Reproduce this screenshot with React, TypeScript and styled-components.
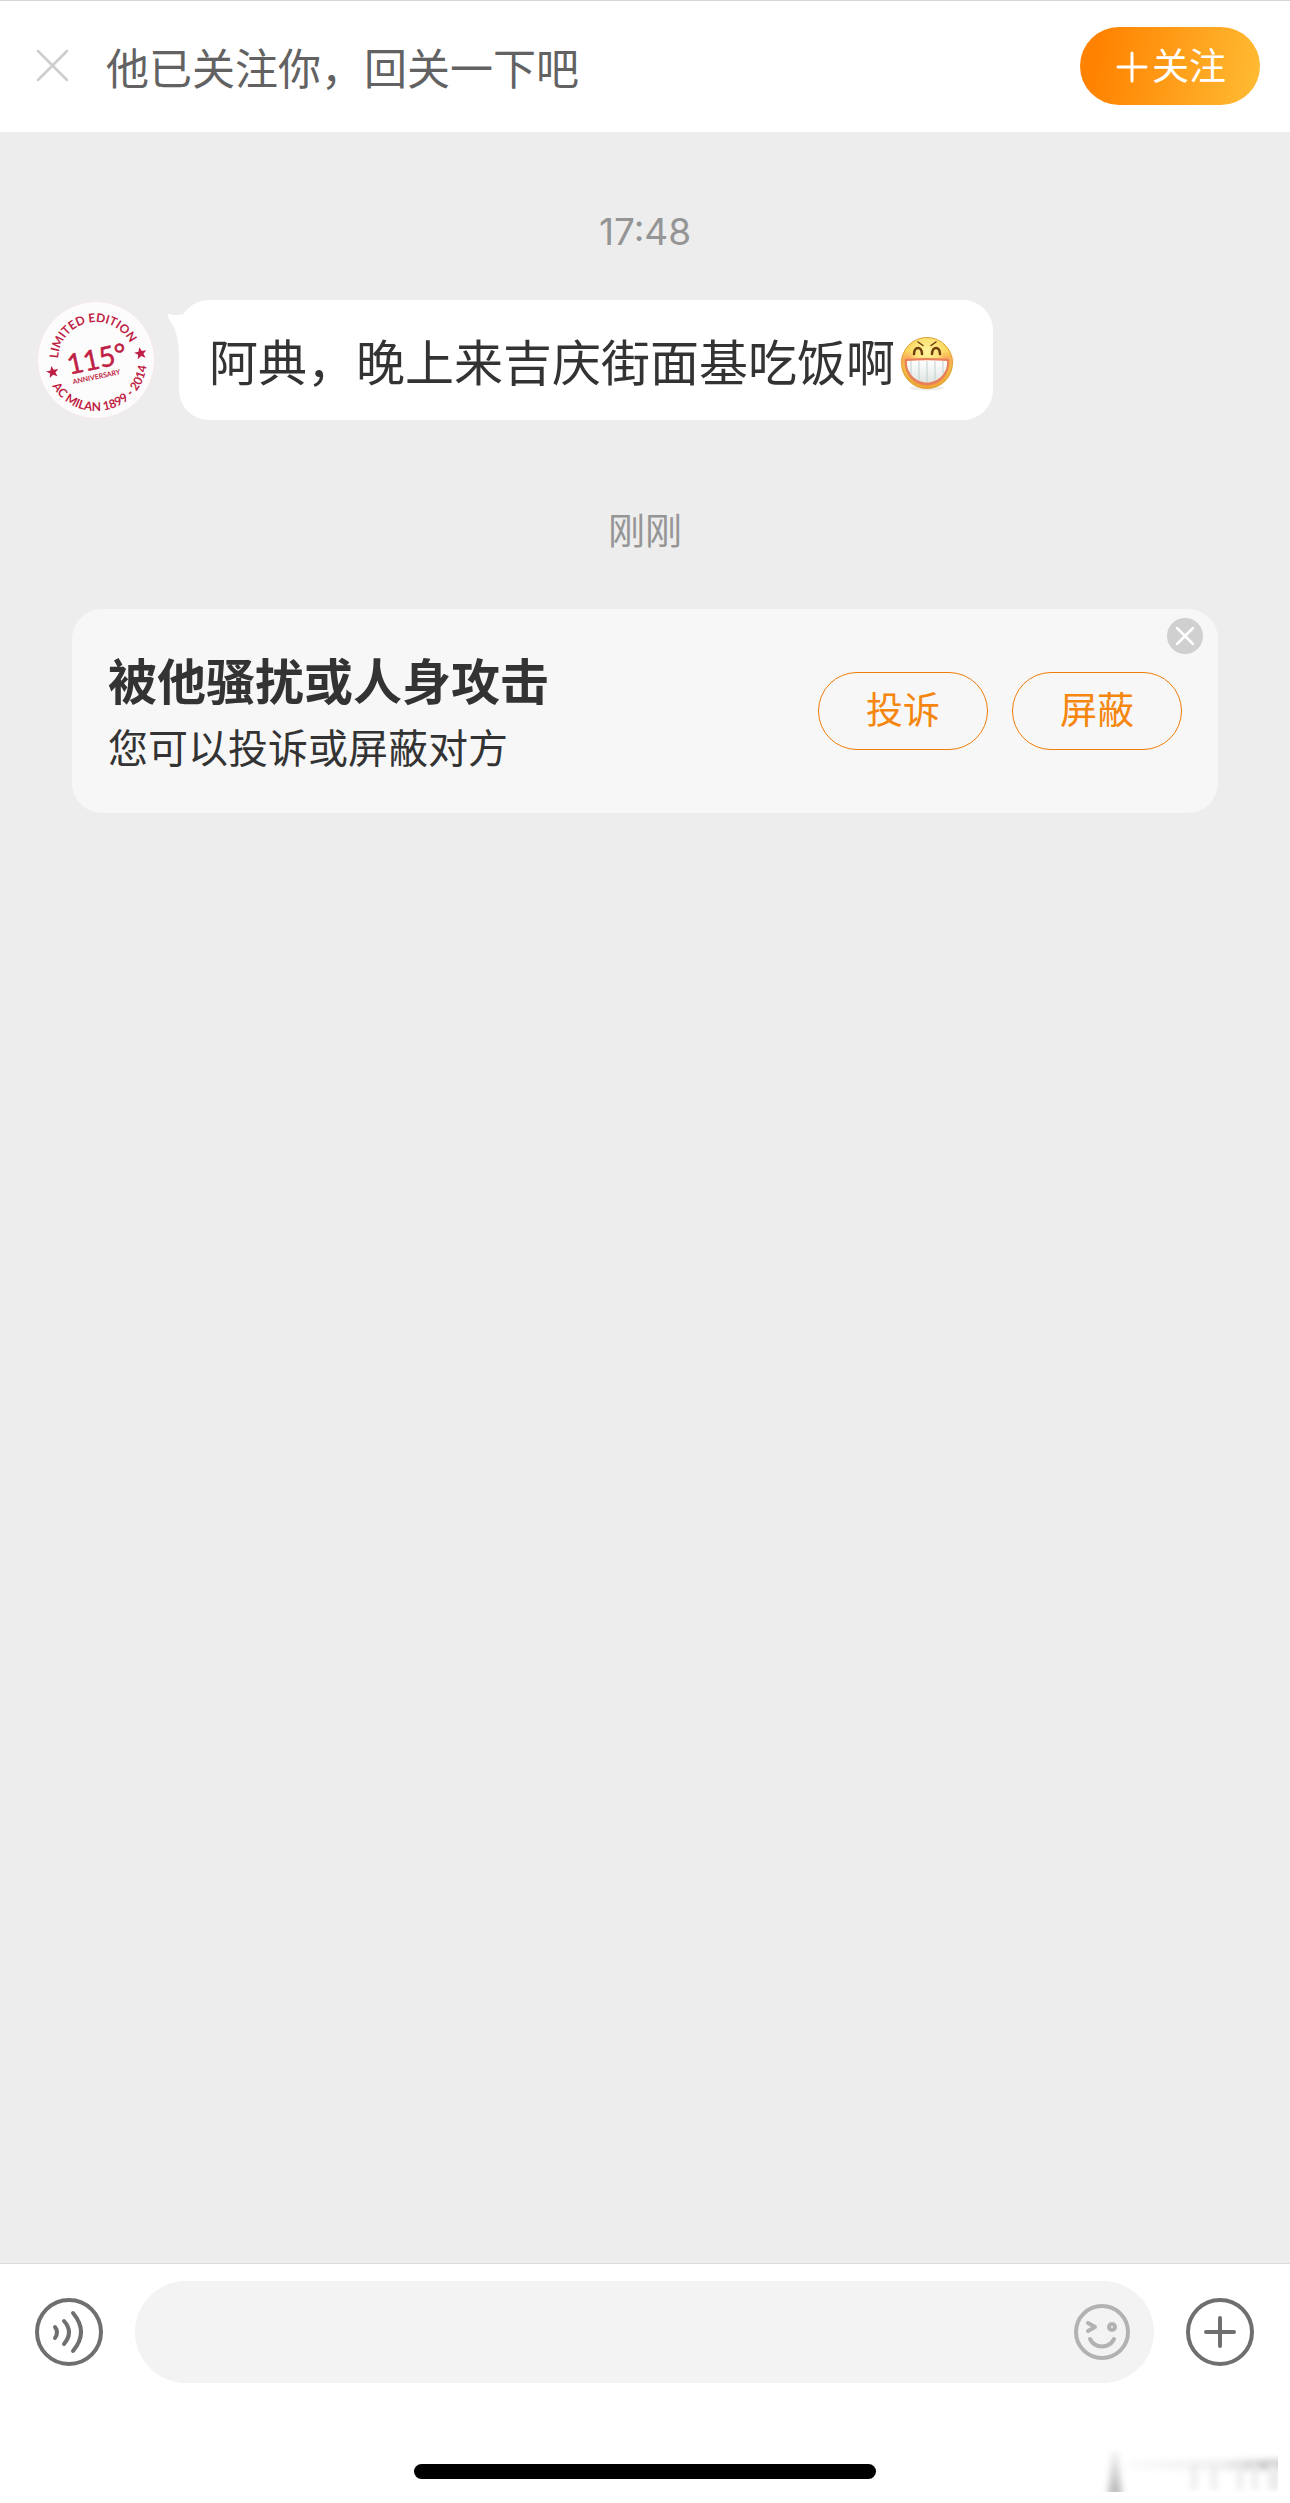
import React, { useState } from "react";
import styled, { createGlobalStyle } from "styled-components";

const GlobalStyle = createGlobalStyle`
  *, *::before, *::after { box-sizing: border-box; }
  body {
    margin: 0;
    background: #ededed;
    font-family: Inter, "Noto Sans CJK SC", sans-serif;
    color: #333;
  }
  button {
    margin: 0;
    padding: 0;
    border: 0;
    background: none;
    font: inherit;
    color: inherit;
    cursor: pointer;
  }
  svg { display: block; }
`;

const Page = styled.div`
  display: flex;
  flex-direction: column;
  min-height: 100vh;
`;

const FollowBanner = styled.header`
  display: flex;
  align-items: center;
  gap: 36px;
  padding: 26px 30px 27px 36px;
  background: #fff;
  border-top: 1px solid #d6d6d6;
`;

const BannerText = styled.p`
  flex: 1;
  margin: 0;
  padding-top: 6px;
  font-size: 43px;
  line-height: 60px;
  color: #626262;
`;

const IconButton = styled.button`
  flex: none;
`;

const FollowButton = styled.button`
  display: flex;
  align-items: center;
  justify-content: center;
  gap: 4px;
  width: 180px;
  height: 78px;
  padding: 2px 0 0 2px;
  border-radius: 39px;
  background: linear-gradient(100deg, #ff8200 10%, #ffbc34 100%);
  color: #fff;
  font-size: 37px;
  line-height: 54px;
`;

const Messages = styled.main`
  flex: 1;
  display: flex;
  flex-direction: column;
`;

const TimeStamp = styled.time<{ $gap: number }>`
  align-self: center;
  margin-top: ${(p) => p.$gap}px;
  font-size: 37px;
  line-height: 56px;
  color: #959595;
`;

const MessageRow = styled.article`
  display: flex;
  align-items: flex-start;
  gap: 23px;
  margin-top: 40px;
  padding: 0 36px;
`;

const Bubble = styled.div`
  position: relative;
  display: flex;
  align-items: center;
  gap: 4px;
  min-height: 120px;
  padding: 28px 38px 20px 30px;
  border-radius: 30px;
  background: #fff;
`;

const Tail = styled.svg`
  position: absolute;
  left: -12px;
  top: 12px;
`;

const BubbleText = styled.p`
  margin: 0;
  font-size: 49px;
  line-height: 72px;
`;

const Card = styled.section`
  position: relative;
  display: flex;
  align-items: center;
  justify-content: space-between;
  gap: 24px;
  margin: 49px 72px 0;
  padding: 33px 36px;
  min-height: 204px;
  border-radius: 30px;
  background: #f7f7f7;
`;

const CardCopy = styled.div`
  padding-top: 4px;
`;

const CardTitle = styled.h2`
  margin: 0;
  font-size: 49px;
  font-weight: 700;
  line-height: 72px;
`;

const CardNote = styled.p`
  margin: 0;
  font-size: 40px;
  line-height: 60px;
`;

const CardActions = styled.div`
  display: flex;
  gap: 24px;
`;

const OutlineButton = styled.button`
  && { border: 1px solid #ee7c08; }
  width: 170px;
  height: 78px;
  border-radius: 39px;
  color: #f5860f;
  font-size: 37px;
  line-height: 54px;
`;

const CardClose = styled.button`
  position: absolute;
  top: 9px;
  right: 15px;
`;

const Composer = styled.footer`
  background: #fff;
  border-top: 1px solid #dcdcdc;
`;

const ComposerRow = styled.form`
  display: flex;
  align-items: center;
  gap: 32px;
  padding: 17px 36px 0 35px;
`;

const InputPill = styled.label`
  flex: 1;
  display: flex;
  align-items: center;
  height: 102px;
  padding: 0 23px 0 48px;
  border-radius: 51px;
  background: #f3f3f3;
`;

const TextField = styled.input`
  flex: 1;
  min-width: 0;
  border: 0;
  outline: 0;
  background: none;
  font: inherit;
  font-size: 43px;
  color: #333;
`;

const BottomEdge = styled.div`
  display: grid;
  grid-template-columns: 1fr 462px 1fr;
  align-items: center;
  height: 120px;
  padding: 64px 12px 8px;
`;

const HomeBar = styled.div`
  grid-column: 2;
  height: 15px;
  border-radius: 8px;
  background: #000;
`;

const Smudge = styled.svg`
  justify-self: end;
`;

const Avatar = () => (
  <svg width="120" height="120" viewBox="0 0 120 120" role="img" aria-label="头像">
    <defs>
      <path id="arcTop" d="M22 60 A38 38 0 0 1 98 60" />
      <path id="arcBottom" d="M9 60 A51 51 0 0 0 111 60" />
    </defs>
    <circle cx="60" cy="60" r="58.500" fill="#fdfcfc" stroke="#f6e9ea" strokeWidth="1" />
    <g fill="#bf1e45" fontFamily="Lato, sans-serif" transform="rotate(-12 60 60)">
      <text fontSize="12" fontWeight="700" textAnchor="middle">
        <textPath href="#arcTop" startOffset="50%">LIMITED EDITION</textPath>
      </text>
      <text fontSize="12" fontWeight="700" textAnchor="middle">
        <textPath href="#arcBottom" startOffset="50%">AC MILAN 1899 - 2014</textPath>
      </text>
      <text x="61" y="69" fontSize="28" textAnchor="middle" stroke="#bf1e45" strokeWidth=".5">115°</text>
      <text x="57" y="79" fontSize="7" fontWeight="700" textAnchor="middle">ANNIVERSARY</text>
      <path id="star" d="M15 56.500l1.700 4.200 4.500.2-3.500 2.800 1.300 4.300-4-2.500-4 2.500 1.300-4.300-3.500-2.800 4.500-.2z" />
      <use href="#star" x="90" />
    </g>
  </svg>
);

const Grin = () => (
  <svg width="56" height="56" viewBox="0 0 56 56" role="img" aria-label="呲牙">
    <defs>
      <radialGradient id="face" cx="50%" cy="28%" r="72%">
        <stop offset="0" stopColor="#fff3a0" />
        <stop offset=".55" stopColor="#fbd75c" />
        <stop offset="1" stopColor="#eda02c" />
      </radialGradient>
      <radialGradient id="cheek">
        <stop offset="0" stopColor="#f98f5c" stopOpacity=".8" />
        <stop offset="1" stopColor="#f98f5c" stopOpacity="0" />
      </radialGradient>
      <linearGradient id="teeth" x2="0" y2="1">
        <stop offset="0" stopColor="#fff" />
        <stop offset="1" stopColor="#dfe5e3" />
      </linearGradient>
    </defs>
    <ellipse cx="28" cy="52" rx="17" ry="2.500" fill="#efedea" />
    <circle cx="28" cy="27" r="25.500" fill="url(#face)" stroke="#dda02f" strokeWidth="1" />
    <circle cx="9" cy="24" r="9" fill="url(#cheek)" />
    <circle cx="47" cy="24" r="9" fill="url(#cheek)" />
    <path d="M6 23Q28 21 50 23C52 38 41 49.500 28 49.500S4 38 6 23z" fill="#e8805a" />
    <path d="M8 25Q28 23.500 48 25C49 37 39 46.500 28 46.500S7 37 8 25z" fill="url(#teeth)" />
    <path d="M12 25v13M20 25v19M28 25v21M36 25v19M44 25v13" stroke="#c2cfd0" strokeWidth="1" />
    <path d="M15 18c0-8 8-8 8 0M33 18c0-8 8-8 8 0" fill="none" stroke="#6b3b0c" strokeWidth="2.500" strokeLinecap="round" />
    <path d="M19 6l5 3.500M37 6l-5 3.500" stroke="#6b3b0c" strokeWidth="1.500" strokeLinecap="round" />
  </svg>
);

export default function App() {
  const [draft, setDraft] = useState("");
  return (
    <Page>
      <GlobalStyle />
      <FollowBanner>
        <IconButton type="button" aria-label="关闭">
          <svg width="34" height="34" viewBox="0 0 34 34" stroke="#cdcdcd" strokeWidth="2.500" strokeLinecap="round">
            <path d="M2 2l29 29M31 2L2 31" />
          </svg>
        </IconButton>
        <BannerText>他已关注你，回关一下吧</BannerText>
        <FollowButton type="button">
          <svg width="32" height="32" viewBox="0 0 32 32" stroke="#fff" strokeWidth="3" strokeLinecap="round">
            <path d="M16 2v28M2 16h28" />
          </svg>
          关注
        </FollowButton>
      </FollowBanner>

      <Messages>
        <TimeStamp $gap={72} dateTime="17:48">17:48</TimeStamp>
        <MessageRow>
          <Avatar />
          <Bubble>
            <Tail width="36" height="44" viewBox="0 0 36 44" fill="#fff" aria-hidden="true">
              <path d="M2 2Q8 4 17 2L36 0V44H12Q12 20 2 7Q-1 2 2 2z" />
            </Tail>
            <BubbleText>阿典，晚上来吉庆街面基吃饭啊</BubbleText>
            <Grin />
          </Bubble>
        </MessageRow>
        <TimeStamp $gap={84}>刚刚</TimeStamp>
        <Card>
          <CardCopy>
            <CardTitle>被他骚扰或人身攻击</CardTitle>
            <CardNote>您可以投诉或屏蔽对方</CardNote>
          </CardCopy>
          <CardActions>
            <OutlineButton type="button">投诉</OutlineButton>
            <OutlineButton type="button">屏蔽</OutlineButton>
          </CardActions>
          <CardClose type="button" aria-label="关闭提示">
            <svg width="36" height="36" viewBox="0 0 36 36">
              <circle cx="18" cy="18" r="18" fill="#d0d0d0" />
              <path d="M10 10l16 16M26 10L10 26" stroke="#fff" strokeWidth="2.500" strokeLinecap="round" />
            </svg>
          </CardClose>
        </Card>
      </Messages>

      <Composer>
        <ComposerRow onSubmit={(e) => e.preventDefault()}>
          <IconButton type="button" aria-label="语音">
            <svg width="68" height="68" viewBox="0 0 68 68" fill="none" stroke="#6f6f6f" strokeWidth="4" strokeLinecap="round">
              <circle cx="34" cy="34" r="32" />
              <path d="M20 29Q24 34 20 40M29 23Q39 34 29 46M38 15Q54 34 38 53" />
            </svg>
          </IconButton>
          <InputPill>
            <TextField aria-label="消息" value={draft} onChange={(e) => setDraft(e.target.value)} />
            <IconButton type="button" aria-label="表情">
              <svg width="58" height="58" viewBox="0 0 58 58" fill="none" stroke="#b2b2b2" strokeWidth="4" strokeLinecap="round" strokeLinejoin="round">
                <circle cx="29" cy="29" r="26" />
                <path d="M15 20l7 4-7 4M17 36C22 46 36 46 41 36" />
                <circle cx="39" cy="24" r="3" />
              </svg>
            </IconButton>
          </InputPill>
          <IconButton type="button" aria-label="更多">
            <svg width="68" height="68" viewBox="0 0 68 68" fill="none" stroke="#6f6f6f" strokeWidth="4" strokeLinecap="round">
              <circle cx="34" cy="34" r="32" />
              <path d="M34 20v28M20 34h28" />
            </svg>
          </IconButton>
        </ComposerRow>
        <BottomEdge>
          <HomeBar />
          <Smudge width="180" height="42" viewBox="0 0 180 42" aria-hidden="true">
            <defs>
              <filter id="soft" x="-20%" y="-20%" width="140%" height="140%">
                <feGaussianBlur stdDeviation="3" />
              </filter>
              <linearGradient id="fade">
                <stop offset="0" stopColor="#fbfbfb" />
                <stop offset=".6" stopColor="#f0f0f0" />
                <stop offset="1" stopColor="#b4b4b4" />
              </linearGradient>
              <linearGradient id="drop" x2="0" y2="1">
                <stop offset="0" stopColor="#f6f6f6" />
                <stop offset="1" stopColor="#b4b4b4" />
              </linearGradient>
            </defs>
            <g filter="url(#soft)">
              <path d="M14 0h6l4 46H10z" fill="url(#drop)" />
              <path d="M30 10h158v10H30z" fill="url(#fade)" />
              <path d="M93 14h6v26h-6zM113 14h6v26h-6zM139 14h6v26h-6zM154 14h6v26h-6zM170 14h12v26h-12z" fill="#ececec" />
            </g>
          </Smudge>
        </BottomEdge>
      </Composer>
    </Page>
  );
}
